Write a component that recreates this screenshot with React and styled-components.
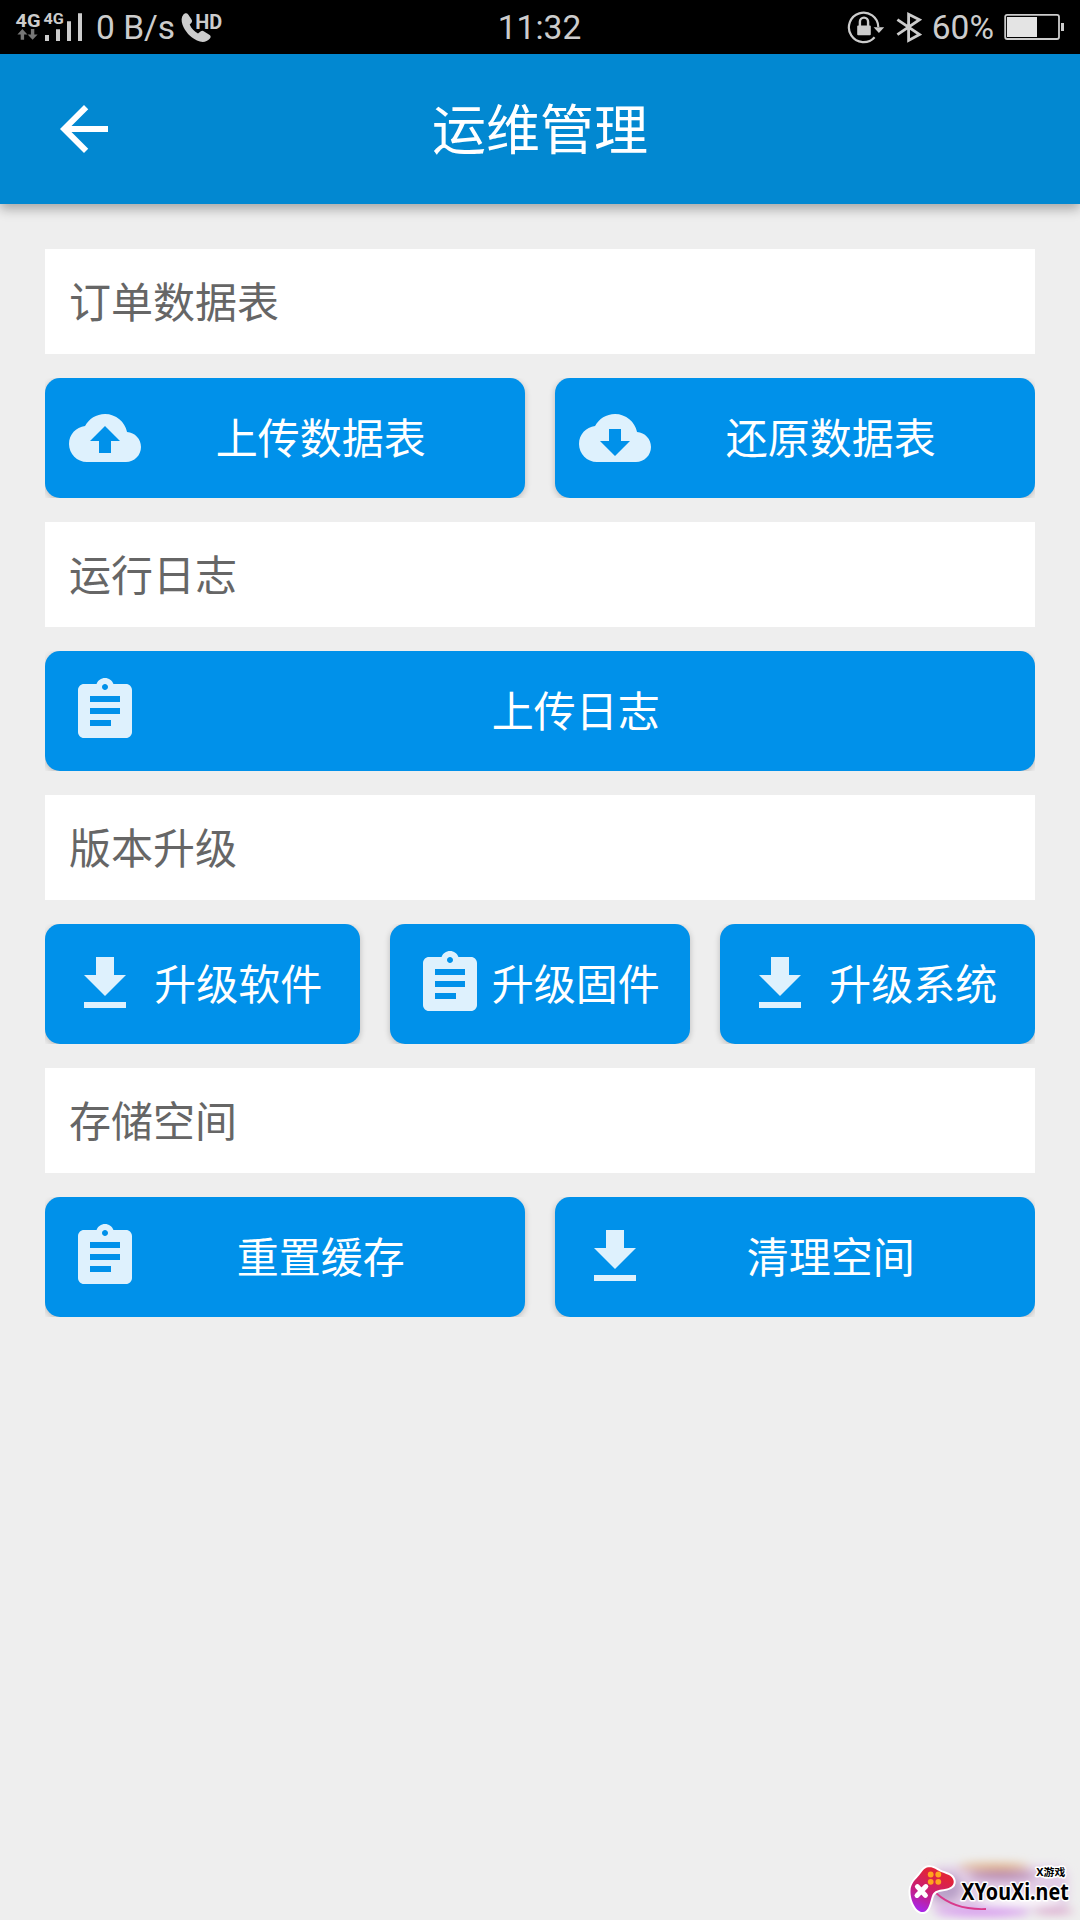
import React from 'react'
import styled, { createGlobalStyle } from 'styled-components';

const icons = {
    back: "M20 11H7.83l5.59-5.59L12 4l-8 8 8 8 1.41-1.41L7.83 13H20v-2z",
    upload: "M19.35 10.04C18.67 6.59 15.64 4 12 4 9.11 4 6.6 5.64 5.35 8.04 2.34 8.36 0 10.91 0 14c0 3.31 2.69 6 6 6h13c2.76 0 5-2.24 5-5 0-2.64-2.05-4.78-4.65-4.96zM14 13v4h-4v-4H7l5-5 5 5h-3z",
    restore: "M19.35 10.04C18.67 6.59 15.64 4 12 4 9.11 4 6.6 5.64 5.35 8.04 2.34 8.36 0 10.91 0 14c0 3.31 2.69 6 6 6h13c2.76 0 5-2.24 5-5 0-2.64-2.05-4.78-4.65-4.96zM17 13l-5 5-5-5h3V9h4v4h3z",
    clipboard: "M19 3h-4.18C14.4 1.84 13.3 1 12 1c-1.3 0-2.4.84-2.82 2H5c-1.1 0-2 .9-2 2v14c0 1.1.9 2 2 2h14c1.1 0 2-.9 2-2V5c0-1.1-.9-2-2-2zm-7 0c.55 0 1 .45 1 1s-.45 1-1 1-1-.45-1-1 .45-1 1-1zm2 14H7v-2h7v2zm3-4H7v-2h10v2zm0-4H7V7h10v2z",
    download: "M19 9h-4V3H9v6H5l7 7 7-7zM5 18v2h14v-2H5z",
}

const sections = [
    {
        title: '订单数据表',
        columns: '480px 480px',
        actions: [
            { icon: 'upload', label: '上传数据表' },
            { icon: 'restore', label: '还原数据表' },
        ],
    },
    {
        title: '运行日志',
        columns: '1fr',
        actions: [{ icon: 'clipboard', label: '上传日志' }],
    },
    {
        title: '版本升级',
        columns: '315px 300px 315px',
        actions: [
            { icon: 'download', label: '升级软件' },
            { icon: 'clipboard', label: '升级固件' },
            { icon: 'download', label: '升级系统' },
        ],
    },
    {
        title: '存储空间',
        columns: '480px 480px',
        actions: [
            { icon: 'clipboard', label: '重置缓存' },
            { icon: 'download', label: '清理空间' },
        ],
    },
]

const Icon = ({ name }) => (
    <IconSvg viewBox="0 0 24 24">
        <path d={icons[name]} />
    </IconSvg>
)

const SignalIcon = () => (
    <svg width="68" height="54" viewBox="15 0 68 54" fill="#ccc">
        <SvgLabel x="15.6" y="26.7" fontSize="18.6" textLength="25" lengthAdjust="spacingAndGlyphs">4G</SvgLabel>
        <SvgLabel x="43.4" y="24" fontSize="15" textLength="20.4" lengthAdjust="spacingAndGlyphs">4G</SvgLabel>
        <g fill="#777">
            <path d="M22.4 29l5 5.4h-3.3v5.4h-3.4v-5.4h-3.3z" />
            <path d="M32.6 39.8l5-5.4h-3.3V29h-3.4v5.4h-3.3z" />
        </g>
        <path d="M45 35h4v6h-4zM56 29.3h4V41h-4zM67 21.3h4V41h-4zM78 13.3h4V41h-4z" />
    </svg>
)

const CallIcon = () => (
    <svg width="42" height="54" viewBox="180 0 42 54" fill="#ccc">
        <path d="M182.4 14.6c1.8-2 3.6-1.8 4.8-.2l3.2 4.8c1 1.6.8 2.8-.2 3.8l-1.5 1.5c1.8 4.2 4.6 7 8.3 8.9l2.5-1.9c1.2-.9 2.4-.9 3.6-.1l5.2 3.3c1.6 1.1 1.8 2.4.6 3.8-3.5 4-8.2 4.2-12.9 1.9-7.2-3.5-11.7-9-14.4-15.5-1.4-3.7-1.5-7.6.8-10.3z" />
        <SvgLabel x="194.3" y="28.6" fontSize="19.8" textLength="27" lengthAdjust="spacingAndGlyphs">HD</SvgLabel>
    </svg>
)

const RotationLockIcon = () => (
    <svg width="38" height="54" viewBox="847 0 38 54" fill="none" stroke="#ccc">
        <path d="M874.6 37.2A14.7 14.7 0 1 1 878.3 27" strokeWidth="2.2" />
        <path d="M873.6 27.2h10.6l-5.3 5.7z" fill="#ccc" stroke="none" />
        <rect x="857.2" y="25.4" width="13.6" height="9.8" rx="1" fill="#ccc" stroke="none" />
        <path d="M859.9 26v-4.3a4.1 4.1 0 0 1 8.2 0V26" strokeWidth="2.4" />
    </svg>
)

const BluetoothIcon = () => (
    <svg width="26" height="54" viewBox="895 0 26 54" fill="none" stroke="#ccc" strokeWidth="2.8">
        <path d="M896.4 19.6L918.5 34.5l-10.9 5.9V14.3l10.9 5.4L896.4 34.6" />
    </svg>
)

const BatteryIcon = () => (
    <svg width="60" height="54" viewBox="1004 0 60 54">
        <rect x="1005.2" y="14.8" width="53.8" height="24.2" rx="2" fill="none" stroke="#ccc" strokeWidth="1.8" />
        <path d="M1007 17h30v20h-30z" fill="#e4e4e4" />
        <path d="M1061 23h3v8h-3z" fill="#ccc" />
    </svg>
)

const SiteLogo = () => (
    <LogoSvg viewBox="890 1840 190 80">
        <defs>
            <linearGradient id="pad" x1="0.7" y1="0" x2="0.3" y2="1">
                <stop offset="0.2" stopColor="#e0243c" />
                <stop offset="0.6" stopColor="#c81e78" />
                <stop offset="1" stopColor="#a826e8" />
            </linearGradient>
            <filter id="soft" x="-30%" y="-60%" width="160%" height="220%">
                <feGaussianBlur stdDeviation="5" />
            </filter>
        </defs>
        <g filter="url(#soft)">
            <rect x="928" y="1866" width="140" height="44" rx="12" fill="#e2cde6" />
            <ellipse cx="994" cy="1867" rx="36" ry="4" fill="#e0b48c" />
            <ellipse cx="946" cy="1888" rx="16" ry="14" fill="#b9a0c8" />
            <ellipse cx="1002" cy="1876" rx="34" ry="5" fill="#b98bb5" />
            <ellipse cx="982" cy="1912" rx="48" ry="4" fill="#d58df0" />
            <ellipse cx="1054" cy="1911" rx="20" ry="3" fill="#d9a0c8" />
            <ellipse cx="1020" cy="1901" rx="42" ry="5" fill="#fff" />
        </g>
        <path d="M936 1893c12 11 27 17 50 16" fill="none" stroke="#d83a8c" strokeWidth="1.8" />
        <path
            d="M928.4 1867.3c5-.6 8 2.3 11.5 4.2 5 2.4 13 3.2 13.8 9.5.8 6-6.2 8-12.2 8.6-4.5.5-8.1 2.2-9.7 6.8-1.9 5.8-2.8 14.6-8.7 15.6-6.9.9-13-11.6-12.6-21.5.3-7 4.9-10.9 8.9-15.5 2.7-3.2 4.6-7.2 9-7.7z"
            fill="url(#pad)"
            stroke="#fff"
            strokeWidth="4"
            paintOrder="stroke"
        />
        <g fill="#ffa51e">
            <circle cx="930.7" cy="1874.5" r="2.9" />
            <circle cx="938.3" cy="1874.5" r="2.9" />
            <circle cx="930.7" cy="1881.8" r="2.9" />
            <circle cx="938.3" cy="1881.8" r="2.9" />
        </g>
        <path d="M917.4 1886.6l8 8.8M925.8 1886.6l-8.8 8.8" stroke="#fff" strokeWidth="5" strokeLinecap="round" />
        <LogoText transform="translate(961.3 1900) scale(0.82 1)" fontSize="24" textLength="131" lengthAdjust="spacingAndGlyphs">XYouXi.net</LogoText>
        <LogoText x="1036.3" y="1876" fontSize="10.5" textLength="29" lengthAdjust="spacingAndGlyphs">X游戏</LogoText>
    </LogoSvg>
)

const App = () => {
    return (
    <Wrapper>
        <GlobalStyle />
        <StatusBar>
            <StatusLeft>
                <SignalIcon />
                <StatusText>0 B/s</StatusText>
                <CallIcon />
            </StatusLeft>
            <StatusText>11:32</StatusText>
            <StatusRight>
                <RotationLockIcon />
                <BluetoothIcon />
                <StatusText>60%</StatusText>
                <BatteryIcon />
            </StatusRight>
        </StatusBar>
        <Header>
            <Icon name="back" />
            <Title>运维管理</Title>
        </Header>
        <Content>
            {sections.map((section) => (
                <React.Fragment key={section.title}>
                    <SectionTitle>{section.title}</SectionTitle>
                    <ButtonRow $columns={section.columns}>
                        {section.actions.map((action) => (
                            <ActionButton key={action.label}>
                                <Icon name={action.icon} />
                                <ButtonLabel>{action.label}</ButtonLabel>
                            </ActionButton>
                        ))}
                    </ButtonRow>
                </React.Fragment>
            ))}
        </Content>
        <SiteLogo />
    </Wrapper>
    )
}

export default App

const GlobalStyle = createGlobalStyle`
    body {
        margin: 0;
        background: #eee;
    }
`

const Wrapper = styled.div`
    position: relative;
    display: flex;
    flex-direction: column;
    width: 1080px;
    height: 1920px;
    overflow: hidden;
    background: #eee;
    font-family: Roboto, "Noto Sans CJK SC", sans-serif;
`

const StatusBar = styled.div`
    display: grid;
    grid-template-columns: 1fr auto 1fr;
    align-items: center;
    height: 54px;
    padding: 0 16px 0 15px;
    box-sizing: border-box;
    background: #000;
`

const StatusLeft = styled.div`
    display: flex;
    align-items: center;
    gap: 13px;

    svg:last-child {
        margin-left: -7px;
    }
`

const StatusRight = styled.div`
    display: flex;
    align-items: center;
    justify-content: flex-end;
    gap: 10px;

    svg:first-child {
        margin-right: 1px;
    }
`

const StatusText = styled.span`
    height: 54px;
    color: #ccc;
    font-size: 33.5px;
    line-height: 55px;
    white-space: nowrap;
`

const SvgLabel = styled.text`
    font-family: Roboto, sans-serif;
    font-weight: 700;
`

const Header = styled.header`
    z-index: 1;
    display: grid;
    grid-template-columns: 72px 1fr 72px;
    align-items: center;
    height: 150px;
    padding: 0 48px;
    box-sizing: border-box;
    background: #0288d1;
    color: #fff;
    box-shadow: 0 5px 11px rgba(0, 0, 0, 0.3);
`

const Title = styled.h1`
    margin: 0;
    padding-top: 5px;
    font-size: 54px;
    font-weight: 400;
    line-height: 80px;
    text-align: center;
`

const Content = styled.main`
    display: flex;
    flex-direction: column;
    gap: 24px;
    padding: 45px;
`

const SectionTitle = styled.h2`
    height: 105px;
    margin: 0;
    padding: 2px 24px 0;
    box-sizing: border-box;
    background: #fff;
    color: #666;
    font-size: 42px;
    font-weight: 400;
    line-height: 105px;
`

const ButtonRow = styled.div`
    display: grid;
    grid-template-columns: ${(props) => props.$columns};
    gap: 30px;
    overflow: hidden;
`

const ActionButton = styled.button`
    display: flex;
    align-items: center;
    height: 120px;
    padding: 0 24px;
    border: 0;
    border-radius: 15px;
    background: #0091ea;
    color: rgba(255, 255, 255, 0.87);
    font-family: inherit;
    box-shadow: 0 2px 6px rgba(0, 0, 0, 0.22);
`

const ButtonLabel = styled.span`
    flex: 1;
    padding: 4px 0.5px 0 0;
    color: #fff;
    font-size: 42px;
    line-height: 60px;
    text-align: center;
    white-space: nowrap;
`

const IconSvg = styled.svg`
    flex: none;
    width: 72px;
    height: 72px;
    fill: currentColor;
`

/* floats over the page corner */
const LogoSvg = styled.svg`
    position: absolute;
    right: 0;
    bottom: 0;
    width: 190px;
    height: 80px;
`

const LogoText = styled.text`
    font-family: "Noto Sans", "Noto Sans CJK SC", sans-serif;
    font-weight: 700;
    fill: #000;
    stroke: #fff;
    stroke-width: 3px;
    stroke-linejoin: round;
    paint-order: stroke;
`
